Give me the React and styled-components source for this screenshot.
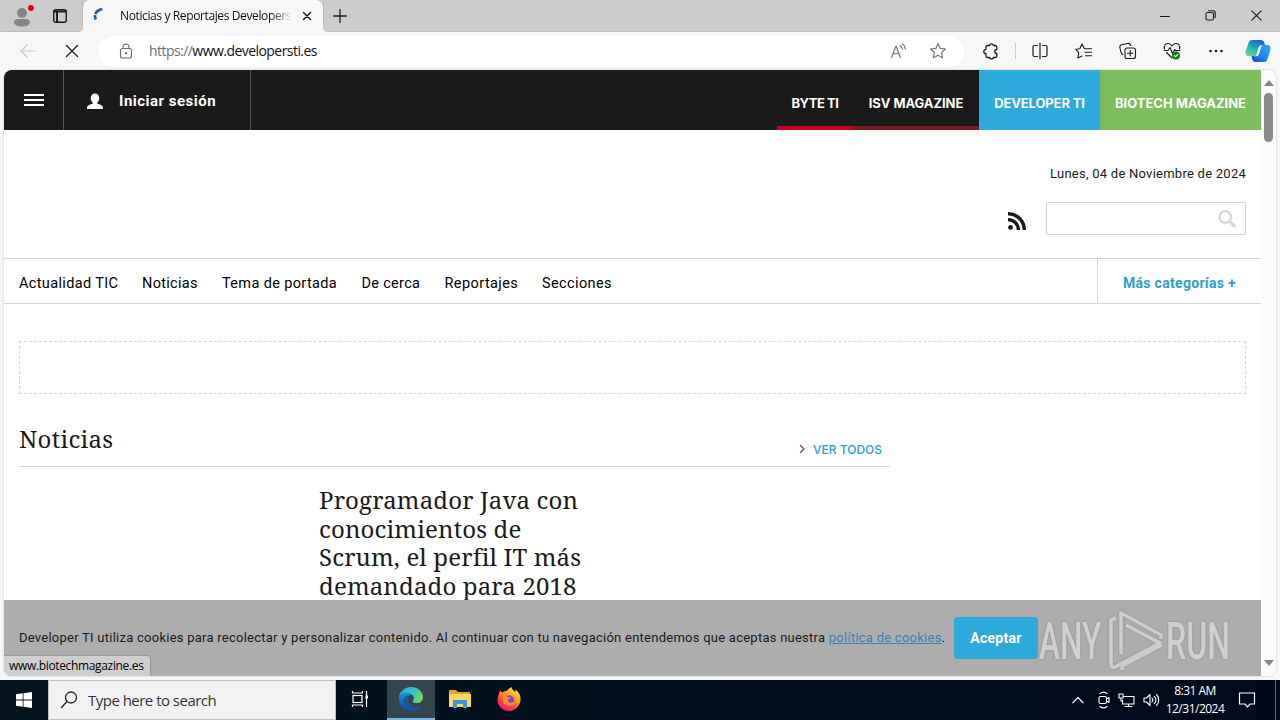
import React from "react";
import styled, { createGlobalStyle, css } from "styled-components";

const ui = `"Open Sans", "Noto Sans", sans-serif`;
const body = `Roboto, "Liberation Sans", sans-serif`;
const caps = `Inter, "Liberation Sans", sans-serif`;
const serif = `"Noto Serif", "Droid Serif", "DejaVu Serif Condensed", "DejaVu Serif", serif`;

const magazines = [
	{ name: "BYTE TI", width: 76, bg: "#1a1a1a", line: "#c8001c", track: -0.45 },
	{ name: "ISV MAGAZINE", width: 126, bg: "#1a1a1a", line: "#7e1a26", track: -0.08 },
	{ name: "DEVELOPER TI", width: 121, bg: "#2eaadc", line: "#2eaadc", track: -0.12 },
	{ name: "BIOTECH MAGAZINE", width: 161, bg: "#7dbe5c", line: "#7dbe5c", track: -0.02 },
];

const sections = [
	{ name: "Actualidad TIC", width: 123, track: 0.36 },
	{ name: "Noticias", width: 80, track: 0.3 },
	{ name: "Tema de portada", width: 139.5, track: 0.36 },
	{ name: "De cerca", width: 83, track: 0.3 },
	{ name: "Reportajes", width: 97.5, track: 0.42 },
	{ name: "Secciones", width: 80, track: 0.38 },
];

const Icon = ({ w = 18, h = 18, color = "#1b1b1b", sw = 1.1, children }) => (
	<svg width={w} height={h} viewBox={`0 0 ${w} ${h}`} fill="none" stroke={color} strokeWidth={sw} strokeLinecap="round" strokeLinejoin="round">
		{children}
	</svg>
);

const STAR = "M9 1.500l2.200 4.900 5.300.6-4 3.600 1.100 5.300L9 13.200l-4.600 2.700 1.100-5.300-4-3.600 5.300-.6z";

const TabStrip = () => (
	<Strip>
		<StripLeft>
			<Icon w={24} h={24} sw={0}>
				<circle cx="11" cy="9" r="5" fill="#858585" />
				<path d="M3 18.500c0-2.300 1.700-3.500 4-3.500h8c2.300 0 4 1.200 4 3.500C18 21.500 15 22.500 11 22.500s-7-1-8-4z" fill="#858585" />
				<circle cx="20" cy="4" r="3" fill="#e3000f" />
			</Icon>
			<Icon w={16} h={16} sw={1.4}>
				<rect x="1.700" y="1.700" width="12.600" height="12.600" rx="2" />
				<path d="M2 3.500h12M5 4v10" strokeWidth="2" />
			</Icon>
		</StripLeft>
		<Tab>
			<Icon w={14} h={18} sw={2.8} color="#1664a8">
				<path d="M3.800 13.500C1.500 9 4 4 11 3" strokeDasharray="4.500 1 9" strokeLinecap="butt" />
			</Icon>
			<TabTitle>Noticias y Reportajes Developers</TabTitle>
			<Icon w={10} h={10} sw={1.5}><path d="M1.500 1.500l7 7M8.500 1.500l-7 7" /></Icon>
		</Tab>
		<NewTab>
			<Icon w={14} h={14} sw={1.3}><path d="M7 .5v13M.5 7h13" /></Icon>
			<WindowButtons>
				<Icon w={10} h={10}><path d="M0 5.500h10" /></Icon>
				<Icon w={11} h={11}>
					<rect x="1" y="2.500" width="7.500" height="7.500" rx="1.500" />
					<path d="M3.500.8h4.500a2.200 2.200 0 0 1 2.200 2.200v4.500" />
				</Icon>
				<Icon w={11} h={11}><path d="M.8.8l9.400 9.400M10.200.8L.8 10.200" /></Icon>
			</WindowButtons>
		</NewTab>
	</Strip>
);

const Toolbar = () => (
	<Bar>
		<BackStop>
			<Icon w={16} h={14} color="#c9c9c9"><path d="M15.500 7H1M7 1L1 7l6 6" /></Icon>
			<Icon w={14} h={14} sw={1.3}><path d="M1.500 1.500l11 11M12.500 1.500l-11 11" /></Icon>
		</BackStop>
		<Address>
			<Icon w={14} h={16} color="#6b6b6b">
				<rect x="1.500" y="5.500" width="11" height="9.500" rx="2" />
				<path d="M4 5.500V4a3 3 0 0 1 6 0v1.500" />
				<circle cx="7" cy="10.200" r=".6" fill="#6b6b6b" />
			</Icon>
			<Url><span>https://</span>www.developersti.es</Url>
			<Icon w={17} h={16} color="#707070">
				<path d="M1.500 14.500L6 3l4.500 11.500M3 10.700h6M10 2.300c1.500.8 2.300 2.200 2.300 4M12.300.9c2 1.200 3 3 3 5.200" />
			</Icon>
			<Icon color="#707070"><path d={STAR} /></Icon>
		</Address>
		<Extensions>
			<Icon w={16} h={17} sw={1.3}>
				<path d="M4.500 2.500h2a2 2 0 0 1 3.900 0h1.600a1.800 1.800 0 0 1 1.800 1.800v2.200a2 2 0 0 0 0 4v2.200a1.800 1.800 0 0 1-1.800 1.800h-1.600a2 2 0 0 1-3.900 0h-2a1.500 1.500 0 0 1-1.500-1.500v-2.300a2.200 2.200 0 0 1 0-4.400V4a1.500 1.500 0 0 1 1.500-1.500z" />
			</Icon>
			<Divider />
		</Extensions>
		<Tools>
			<Icon w={16} h={18} sw={1.2}><path d="M5.500 3.500H2.500A1.500 1.500 0 0 0 1 5v8a1.500 1.500 0 0 0 1.500 1.500h3M10.500 3.500h3A1.500 1.500 0 0 1 15 5v8a1.500 1.500 0 0 1-1.500 1.500h-3M8 1v16" /></Icon>
			<Icon w={18} h={17}>
				<path d="M9.500 5.700L7 .9 4.800 5.700l-4 .6 3 3.500-1 5.200L7 13M9.500 5.700h7M10 9.300h6.500M10.500 12.800h6" />
			</Icon>
			<Icon w={18} h={18}>
				<rect x="6" y="6" width="10.500" height="10.500" rx="2" />
				<path d="M11.200 8.500v5.500M8.500 11.200H14M3.800 12.500C2.500 12 2 10.500 1.600 9L.9 5.500a2.300 2.300 0 0 1 1.800-2.700L8.500 1.500c1.500-.3 2.700.5 3.200 2" />
			</Icon>
			<Icon w={18} h={18}>
				<path d="M1.500 7C.5 3 3 1.500 5 1.500S8.300 2.700 9 4c.7-1.300 2-2.500 4-2.500S17.500 3 16.500 7M3.500 10.500L9 16M1 8.500h4l2-3 2.500 6 2-4 1 1H17" />
				<circle cx="13" cy="13.500" r="4" fill="#0e7a0d" stroke="none" />
				<path d="M11.200 13.500l1.300 1.300 2.400-2.500" stroke="#fff" />
			</Icon>
			<Icon w={16} h={4} sw={0}>
				<circle cx="2.500" cy="2" r="1.300" fill="#1b1b1b" /><circle cx="8" cy="2" r="1.300" fill="#1b1b1b" /><circle cx="13.500" cy="2" r="1.300" fill="#1b1b1b" />
			</Icon>
		</Tools>
		<Copilot />
	</Bar>
);

const Copilot = () => (
	<svg width="26" height="24" viewBox="0 0 26 24">
		<defs>
			<linearGradient id="cpA" x1="0" y1="1" x2=".6" y2="0"><stop offset="0" stopColor="#8fd06a" /><stop offset=".45" stopColor="#25bfb0" /><stop offset="1" stopColor="#1467cf" /></linearGradient>
			<linearGradient id="cpB" x1="0" y1="1" x2="1" y2="0"><stop offset="0" stopColor="#1448c4" /><stop offset=".5" stopColor="#1c8cf0" /><stop offset="1" stopColor="#27aef5" /></linearGradient>
		</defs>
		<path d="M7 1h9c2 0 3 1.500 3.500 3.500L20 6h-3c-2 0-3 1-3.600 3L12 14c-.6 2-1.500 3-3.500 3H4c-3 0-4-2-3.300-5L3.500 4C4.200 2 5 1 7 1z" fill="url(#cpA)" />
		<path d="M19 23h-8.500c-2 0-3-1.500-3.500-3.500L6.500 17h2.300c2 0 3-1 3.600-3L14 9c.6-2 1.600-3 3.600-3H22c3 0 4 2 3.300 5L22.500 20c-.7 2-1.500 3-3.500 3z" fill="url(#cpB)" />
		<path d="M9.500 17.500c1.500-.5 2-1.500 2.500-3l1.500-5c.5-1.600 1.300-2.800 3.500-3.200-.7 1.200-1 2.200-1.300 3.200l-1.500 5c-.6 1.800-1.700 3-4.700 3z" fill="#fff" />
	</svg>
);

const SiteHeader = () => (
	<TopBar>
		<MenuButton>
			<Icon w={20} h={12} color="#fff" sw={2}><path d="M0 1h20M0 6h20M0 11h20" strokeLinecap="butt" /></Icon>
		</MenuButton>
		<Login>
			<Icon w={16} h={17} sw={0}>
				<path d="M8 .5c2.600 0 4.300 1.900 4.300 4.500 0 2-.9 3.700-2 4.600v1.200c2.800.6 5.700 1.700 5.700 4.200V16H0v-1c0-2.500 2.900-3.600 5.700-4.200V9.600c-1.100-.9-2-2.600-2-4.600C3.700 2.400 5.400.5 8 .5z" fill="#fff" />
			</Icon>
			<span>Iniciar sesión</span>
		</Login>
		<Magazines>
			{magazines.map((m) => (
				<Magazine key={m.name} $width={m.width} $bg={m.bg} $line={m.line} $track={m.track}>{m.name}</Magazine>
			))}
		</Magazines>
	</TopBar>
);

const Masthead = () => (
	<Brand>
		<Today>Lunes, 04 de Noviembre de 2024</Today>
		<SearchRow>
			<Icon w={18} h={18} color="#1a1a1a" sw={3.4}>
				<path d="M0 1.800A16 16 0 0 1 16.300 18M0 7.600A10.300 10.300 0 0 1 10.400 18" strokeLinecap="butt" />
				<circle cx="2.500" cy="15.400" r="2.400" fill="#1a1a1a" stroke="none" />
			</Icon>
			<SearchBox>
				<Icon w={18} h={18} color="#d6d6d6" sw={2.2}>
					<circle cx="7.300" cy="7" r="5.800" /><path d="M12 11.700l4.300 4.300" strokeWidth="3" />
				</Icon>
			</SearchBox>
		</SearchRow>
	</Brand>
);

const Watermark = () => (
	<Mark>
		<svg width="196" height="66" viewBox="0 0 196 66">
			<g fill="#d0d0d0" fontFamily="Roboto" fontSize="51" fontWeight="500">
				<text transform="translate(1 54) scale(.62 1)">ANY</text>
				<text transform="translate(128 54) scale(.63 1)">RUN</text>
			</g>
			<g fill="none" stroke="#cdcdcd" strokeWidth="3.600" strokeLinejoin="round">
				<path d="M78 13l-5 2v44c0 3 2 4 4 3l45-24-34-18" />
				<path d="M83 49V8l40 22v4" />
				<path d="M124 40L84 61v4" />
			</g>
		</svg>
	</Mark>
);

const EdgeLogo = () => (
	<svg width="24" height="24" viewBox="0 0 24 24">
		<defs>
			<linearGradient id="edA" x1="0" y1=".3" x2="1" y2=".6"><stop offset="0" stopColor="#2aa8e0" /><stop offset=".55" stopColor="#35c5cb" /><stop offset="1" stopColor="#72e04c" /></linearGradient>
			<linearGradient id="edB" x1="0" y1="0" x2="0" y2="1"><stop offset="0" stopColor="#1b8fe0" /><stop offset="1" stopColor="#114a9e" /></linearGradient>
		</defs>
		<path d="M0 11C.5 4 6 0 12 0c7 0 12 5 12 10 0 4-3 6-6.500 6-2.500 0-4-.8-4-1.600 0-.7 1.300-1.200 1.300-3.400C14.800 8 11 6 7.500 6 3.500 6 .8 8.500 0 11z" fill="url(#edA)" />
		<path d="M0 12c0-3.500 3.500-6 7.500-6 2.200 0 4 .8 5.300 1.800C10 8 8.500 10.500 8.500 13c0 4 4 7.500 8.500 7.500 2 0 3.600-.7 4.800-1.300C20 22 16.500 24 12 24 5.300 24 0 19 0 12z" fill="url(#edB)" />
		<path d="M8.500 13c0-2.300 1.200-4.300 3.300-5-4.300 0-7.300 3-7.300 7 0 5 4.500 8.500 8.500 9 4-.2 7-2 8.800-4.800-1.200.6-2.800 1.300-4.800 1.300-4.500 0-8.500-3.500-8.500-7.500z" fill="#14579f" />
	</svg>
);

const FolderLogo = () => (
	<svg width="22" height="20" viewBox="0 0 22 20">
		<path d="M0 2a1 1 0 0 1 1-1h6l2 2h11a1 1 0 0 1 1 1v14H0z" fill="#e9a820" />
		<path d="M0 5h22v13H0z" fill="#fbd667" />
		<path d="M4 19v-7a1 1 0 0 1 1-1h12a1 1 0 0 1 1 1v7h-4v-4H8v4z" fill="#3f95d5" />
	</svg>
);

const FirefoxLogo = () => (
	<svg width="24" height="24" viewBox="0 0 24 24">
		<defs>
			<linearGradient id="ffA" x1=".8" y1="0" x2=".2" y2="1"><stop offset="0" stopColor="#fff04c" /><stop offset=".4" stopColor="#ff9a1e" /><stop offset=".7" stopColor="#ff3b47" /><stop offset="1" stopColor="#e31587" /></linearGradient>
		</defs>
		<path d="M2 7c0-1.500.7-3 1.500-3.800 0 1 .5 1.800 1 2.300C6 4.500 7.500 4 9 4c1.500-1 3-2.700 5.500-4 0 2.300 2 3.500 4 5V2.500C21.500 5 24 8.500 23.500 13c-.4 6-5.500 11-11.500 11C5.500 24 .5 19 .5 13 .5 10.500 1 8.500 2 7z" fill="url(#ffA)" />
		<circle cx="12" cy="13.500" r="5.300" fill="#7542e5" />
		<path d="M5 9c2-1 4.500-.5 6 1.200h3c0 1.500-2.500 1.800-3 2.600-.5 1 .5 2.700 2.500 2.700 2 0 3-1.500 4.500-.5-1 3-3.500 4-6 4-4 0-7-3-7-10z" fill="#ff8a25" />
	</svg>
);

const TaskBar = () => (
	<Tasks>
		<Start>
			<svg width="16" height="16" viewBox="0 0 16 16" fill="#fff">
				<path d="M0 2.300L6.700 1.300v6.300H0zM7.500 1.200L16 0v7.600H7.500zM0 8.400h6.700v6.400L0 13.800zM7.500 8.400H16V16l-8.500-1.200z" />
			</svg>
		</Start>
		<TaskSearch>
			<Icon w={18} h={18} color="#222" sw={1.3}><circle cx="11" cy="6.500" r="5.500" /><path d="M7 10.500L1.500 16.500" /></Icon>
			<span>Type here to search</span>
		</TaskSearch>
		<TaskButton $width={51}>
			<Icon w={22} h={18} color="#fff" sw={1.2}>
				<rect x="2" y="5.500" width="9" height="7" strokeLinejoin="miter" />
				<path d="M1.500 1v2h10V1M1.500 17v-2h10v2M15.500 1v16" strokeLinecap="butt" />
				<path d="M14.500 5.500h2.500v3h-2.500z" fill="#fff" stroke="none" />
			</Icon>
		</TaskButton>
		<TaskButton $width={48} $active><EdgeLogo /></TaskButton>
		<TaskButton $width={49}><FolderLogo /></TaskButton>
		<TaskButton $width={49}><FirefoxLogo /></TaskButton>
		<Tray>
			<Icon w={12} h={8} color="#fff" sw={1.2}><path d="M.8 6.800L6 1.500l5.200 5.300" /></Icon>
			<Icon w={12} h={18} color="#fff">
				<rect x="1" y="5.500" width="7.500" height="7" rx="1.500" /><path d="M8.500 8l2.500-1.500v5L8.500 10M2 2.500c2-1.600 5-1.600 7 0M2 15.500c2 1.600 5 1.600 7 0" />
			</Icon>
			<Icon w={17} h={15} color="#fff">
				<path d="M6 3.500h10v7.500H4.500V7M10.500 11v2.500M7 13.500h7M1 1h4v4H1zM3 5v3h1.500" strokeLinejoin="miter" />
			</Icon>
			<Icon w={17} h={14} color="#fff">
				<path d="M1 5v4h2.500L7 12.500v-11L3.500 5zM9 5c1 1.200 1 2.800 0 4M11.300 3.300c2 2.200 2 5.200 0 7.400M13.500 1.500c3 3.200 3 7.800 0 11" />
			</Icon>
		</Tray>
		<Clock><span>8:31 AM</span><span>12/31/2024</span></Clock>
		<Notices>
			<Icon w={18} h={16} color="#fff" sw={1.2}><path d="M1.500 1h15v11H12l-2.500 2.800L7 12H1.500z" strokeLinejoin="miter" /></Icon>
		</Notices>
	</Tasks>
);

const App = () => (
	<Desktop>
		<Reset />
		<TabStrip />
		<Toolbar />
		<Viewport>
			<Page>
				<SiteHeader />
				<Masthead />
				<Categories>
					{sections.map((s) => (
						<Category key={s.name} $width={s.width} $track={s.track}>{s.name}</Category>
					))}
					<More>Más categorías +</More>
				</Categories>
				<AdSlot />
				<SectionHead>
					<h2>Noticias</h2>
					<SeeAll>
						<Icon w={7} h={10} color="#666" sw={1.6}><path d="M1.500 1.500L5 5 1.500 8.500" /></Icon>
						<span>VER TODOS</span>
					</SeeAll>
				</SectionHead>
				<Story>Programador Java con conocimientos de Scrum, el perfil IT más demandado para 2018</Story>
				<CookieBar>
					<CookieText>
						Developer TI utiliza cookies para recolectar y personalizar contenido. Al continuar con tu navegación entendemos que aceptas nuestra <a>política de cookies</a>.
					</CookieText>
					<Accept>Aceptar</Accept>
					<Watermark />
				</CookieBar>
				<StatusBubble>www.biotechmagazine.es</StatusBubble>
			</Page>
			<ScrollBar>
				<Icon w={10} h={6} sw={0}><path d="M5 0l5 6H0z" fill="#858585" /></Icon>
				<Thumb />
				<Icon w={10} h={6} sw={0}><path d="M5 6L0 0h10z" fill="#858585" /></Icon>
			</ScrollBar>
		</Viewport>
		<TaskBar />
	</Desktop>
);

const Reset = createGlobalStyle`
	* { box-sizing: border-box; }
	body { margin: 0; overflow: hidden; }
	svg { display: block; flex: none; }
`;

const center = css`
	display: flex;
	align-items: center;
	justify-content: center;
`;

const Desktop = styled.div`
	width: 1280px;
	height: 720px;
	display: flex;
	flex-direction: column;
	background: #f7f7f7;
	font-family: ${ui};
	white-space: nowrap;
`;

const Strip = styled.div`
	height: 32px;
	display: flex;
	background: #f7f7f7;
`;

const StripLeft = styled.div`
	width: 83px;
	padding: 0 0 0 11px;
	display: flex;
	align-items: center;
	gap: 17px;
	background: #ccc;
	border-bottom: 1px solid #bcbcbc;
	border-right: 1px solid #bcbcbc;
	border-radius: 0 0 5px 0;
`;

const Tab = styled.div`
	width: 240px;
	padding: 0 11px 0 9px;
	display: flex;
	align-items: center;
	background: linear-gradient(#ccc, #ccc) 0 0 / 100% 8px no-repeat;
	position: relative;
	z-index: 0;
	&::before {
		content: "";
		position: absolute;
		inset: 0;
		z-index: -1;
		background: #f7f7f7;
		border-radius: 8px 8px 0 0;
	}
	svg:first-child { margin-top: -3px; }
`;

const TabTitle = styled.span`
	flex: 1;
	margin-left: 14px;
	margin-right: 12px;
	overflow: hidden;
	font-size: 12px;
	line-height: 30px;
	letter-spacing: -0.38px;
	color: #111;
	mask-image: linear-gradient(90deg, #000 88%, transparent 102%);
`;

const NewTab = styled.div`
	flex: 1;
	padding: 0 18px 0 9px;
	display: flex;
	align-items: center;
	justify-content: space-between;
	background: #ccc;
	border-bottom: 1px solid #bcbcbc;
	border-left: 1px solid #bcbcbc;
	border-radius: 0 0 0 5px;
`;

const WindowButtons = styled.div`
	display: flex;
	align-items: center;
	gap: 35px;
`;

const Bar = styled.div`
	height: 38px;
	display: flex;
	align-items: center;
`;

const BackStop = styled.div`
	width: 99px;
	padding-left: 20px;
	display: flex;
	align-items: center;
	gap: 29px;
`;

const Address = styled.div`
	width: 865px;
	height: 31px;
	padding: 0 17px 0 20px;
	display: flex;
	align-items: center;
	gap: 22px;
	background: #fff;
	border-radius: 16px;
`;

const Url = styled.span`
	flex: 1;
	margin-left: -6px;
	font-size: 14px;
	line-height: 28px;
	letter-spacing: -0.55px;
	color: #111;
	span { color: #6f6f6f; }
`;

const Extensions = styled.div`
	width: 54px;
	padding-left: 19px;
	display: flex;
	align-items: center;
	gap: 16px;
`;

const Tools = styled.div`
	width: 227px;
	display: grid;
	grid-template-columns: repeat(5, 44px);
	align-items: center;
	justify-items: center;
`;

const Divider = styled.i`
	width: 1px;
	height: 16px;
	background: #ccc;
`;

const Viewport = styled.div`
	width: 1272px;
	height: 606px;
	margin: 0 4px 4px;
	display: flex;
	border-radius: 8px;
	overflow: hidden;
	background: #fff;
	box-shadow: 0 0 2px #b5b5b5;
`;

const Page = styled.div`
	width: 1257px;
	position: relative;
	font-family: ${body};
	color: #1a1a1a;
`;

const ScrollBar = styled.div`
	width: 15px;
	padding: 10px 0;
	display: flex;
	flex-direction: column;
	align-items: center;
	background: #fbfbfb;
`;

const Thumb = styled.div`
	width: 9px;
	height: 49px;
	margin: 7px 0 auto;
	border-radius: 5px;
	background: #8a8a8a;
`;

const TopBar = styled.header`
	height: 60px;
	display: flex;
	background: #1a1a1a;
`;

const MenuButton = styled.div`
	width: 60px;
	border-right: 1px solid #555;
	${center}
`;

const Login = styled.div`
	width: 187px;
	padding: 2px 0 0 23px;
	display: flex;
	align-items: center;
	gap: 16px;
	border-right: 1px solid #555;
	color: #fff;
	font-size: 15px;
	font-weight: 700;
	letter-spacing: 0.5px;
`;

const Magazines = styled.nav`
	margin-left: auto;
	display: flex;
`;

const Magazine = styled.a`
	width: ${(p) => p.$width}px;
	padding-top: 10px;
	${center}
	background: ${(p) => p.$bg};
	border-bottom: 4px solid ${(p) => p.$line};
	color: #fff;
	font: 700 13px ${caps};
	letter-spacing: ${(p) => p.$track}px;
`;

const Brand = styled.div`
	height: 128px;
	padding: 34px 15px 0 0;
	display: flex;
	flex-direction: column;
	align-items: flex-end;
`;

const Today = styled.div`
	font-size: 13px;
	line-height: 20px;
	letter-spacing: 0.25px;
`;

const SearchRow = styled.div`
	margin-top: 18px;
	display: flex;
	align-items: center;
	gap: 20px;
	> svg { margin-top: 5px; }
`;

const SearchBox = styled.div`
	width: 200px;
	height: 33px;
	padding-right: 9px;
	display: flex;
	align-items: center;
	justify-content: flex-end;
	border: 1px solid #d2d2d2;
	border-radius: 2px;
`;

const Categories = styled.nav`
	height: 46px;
	padding-left: 15px;
	display: flex;
	border: solid #d6d6d6;
	border-width: 1px 0;
`;

const Category = styled.a`
	width: ${(p) => p.$width}px;
	font-size: 14.500px;
	line-height: 50px;
	letter-spacing: ${(p) => p.$track}px;
	color: #000;
`;

const More = styled.a`
	width: 164px;
	margin-left: auto;
	padding-left: 25px;
	border-left: 1px solid #d6d6d6;
	font-size: 14px;
	font-weight: 700;
	line-height: 48px;
	letter-spacing: 0.3px;
	color: #2e9fcb;
`;

const AdSlot = styled.div`
	height: 53px;
	margin: 37px 15px 0;
	border: 1px dashed #d8d8d8;
`;

const SectionHead = styled.div`
	width: 871px;
	height: 73px;
	margin-left: 15px;
	padding: 0 8px 0 0;
	display: flex;
	justify-content: space-between;
	border-bottom: 1px solid #d6d6d6;
	h2 {
		margin: 28px 0 0;
		font: 400 24px/34px ${serif};
		letter-spacing: 0.28px;
	}
`;

const SeeAll = styled.a`
	height: 20px;
	margin-top: 45px;
	display: flex;
	align-items: center;
	gap: 7px;
	color: #2e9fcb;
	font: 500 12px ${caps};
`;

const Story = styled.h3`
	width: 275px;
	margin: 19px 0 0 315px;
	white-space: normal;
	font: 400 24px/28.600px ${serif};
	letter-spacing: 0.15px;
`;

const CookieBar = styled.div`
	position: absolute;
	inset: auto 0 0 0;
	height: 76px;
	padding-left: 15px;
	display: flex;
	align-items: center;
	background: #adadad;
`;

const CookieText = styled.p`
	width: 935px;
	margin: 0;
	font-size: 13px;
	line-height: 16px;
	letter-spacing: 0.25px;
	a {
		color: #3a7fb5;
		text-decoration: underline;
	}
`;

const Accept = styled.button`
	width: 84px;
	height: 42px;
	padding: 0;
	border: 0;
	border-radius: 3px;
	background: #2eaadc;
	color: #fff;
	font: 700 14px ${body};
	letter-spacing: 0.3px;
`;

const Mark = styled.div`
	width: 196px;
	height: 66px;
	filter: drop-shadow(0 0 1px #8d8d8d);
`;

const StatusBubble = styled.div`
	position: absolute;
	left: 0;
	bottom: 0;
	width: 147px;
	height: 21px;
	padding-left: 5px;
	background: #cfcfcf;
	border: 1px solid #9c9c9c;
	border-width: 1px 1px 0 0;
	border-radius: 0 4px 0 0;
	font: 12px/20px ${ui};
	letter-spacing: -0.34px;
	color: #000;
`;

const Tasks = styled.footer`
	height: 40px;
	padding-right: 4px;
	display: flex;
	background: linear-gradient(90deg, #03141f, #010a1c);
`;

const Start = styled.div`
	width: 48px;
	${center}
`;

const TaskSearch = styled.div`
	width: 288px;
	padding-left: 11px;
	display: flex;
	align-items: center;
	gap: 10px;
	background: #f2f2f2;
	border: 1px solid #bdbdbd;
	color: #333;
	font-size: 15px;
	letter-spacing: -0.52px;
`;

const TaskButton = styled.div`
	width: ${(p) => p.$width}px;
	${center}
	background: ${(p) => (p.$active ? "#33454f" : "transparent")};
	border-bottom: 2px solid ${(p) => (p.$active ? "#76b9ed" : "transparent")};
`;

const Tray = styled.div`
	margin-left: auto;
	display: flex;
	align-items: center;
	gap: 8px;
	svg:first-child { margin-right: 6px; }
`;

const Clock = styled.div`
	width: 70px;
	display: flex;
	flex-direction: column;
	align-items: center;
	justify-content: center;
	color: #fff;
	font-size: 12px;
	line-height: 18px;
	letter-spacing: -0.5px;
`;

const Notices = styled.div`
	width: 46px;
	padding-right: 11px;
	border-right: 1px solid #5d6672;
	${center}
`;

export default App;
